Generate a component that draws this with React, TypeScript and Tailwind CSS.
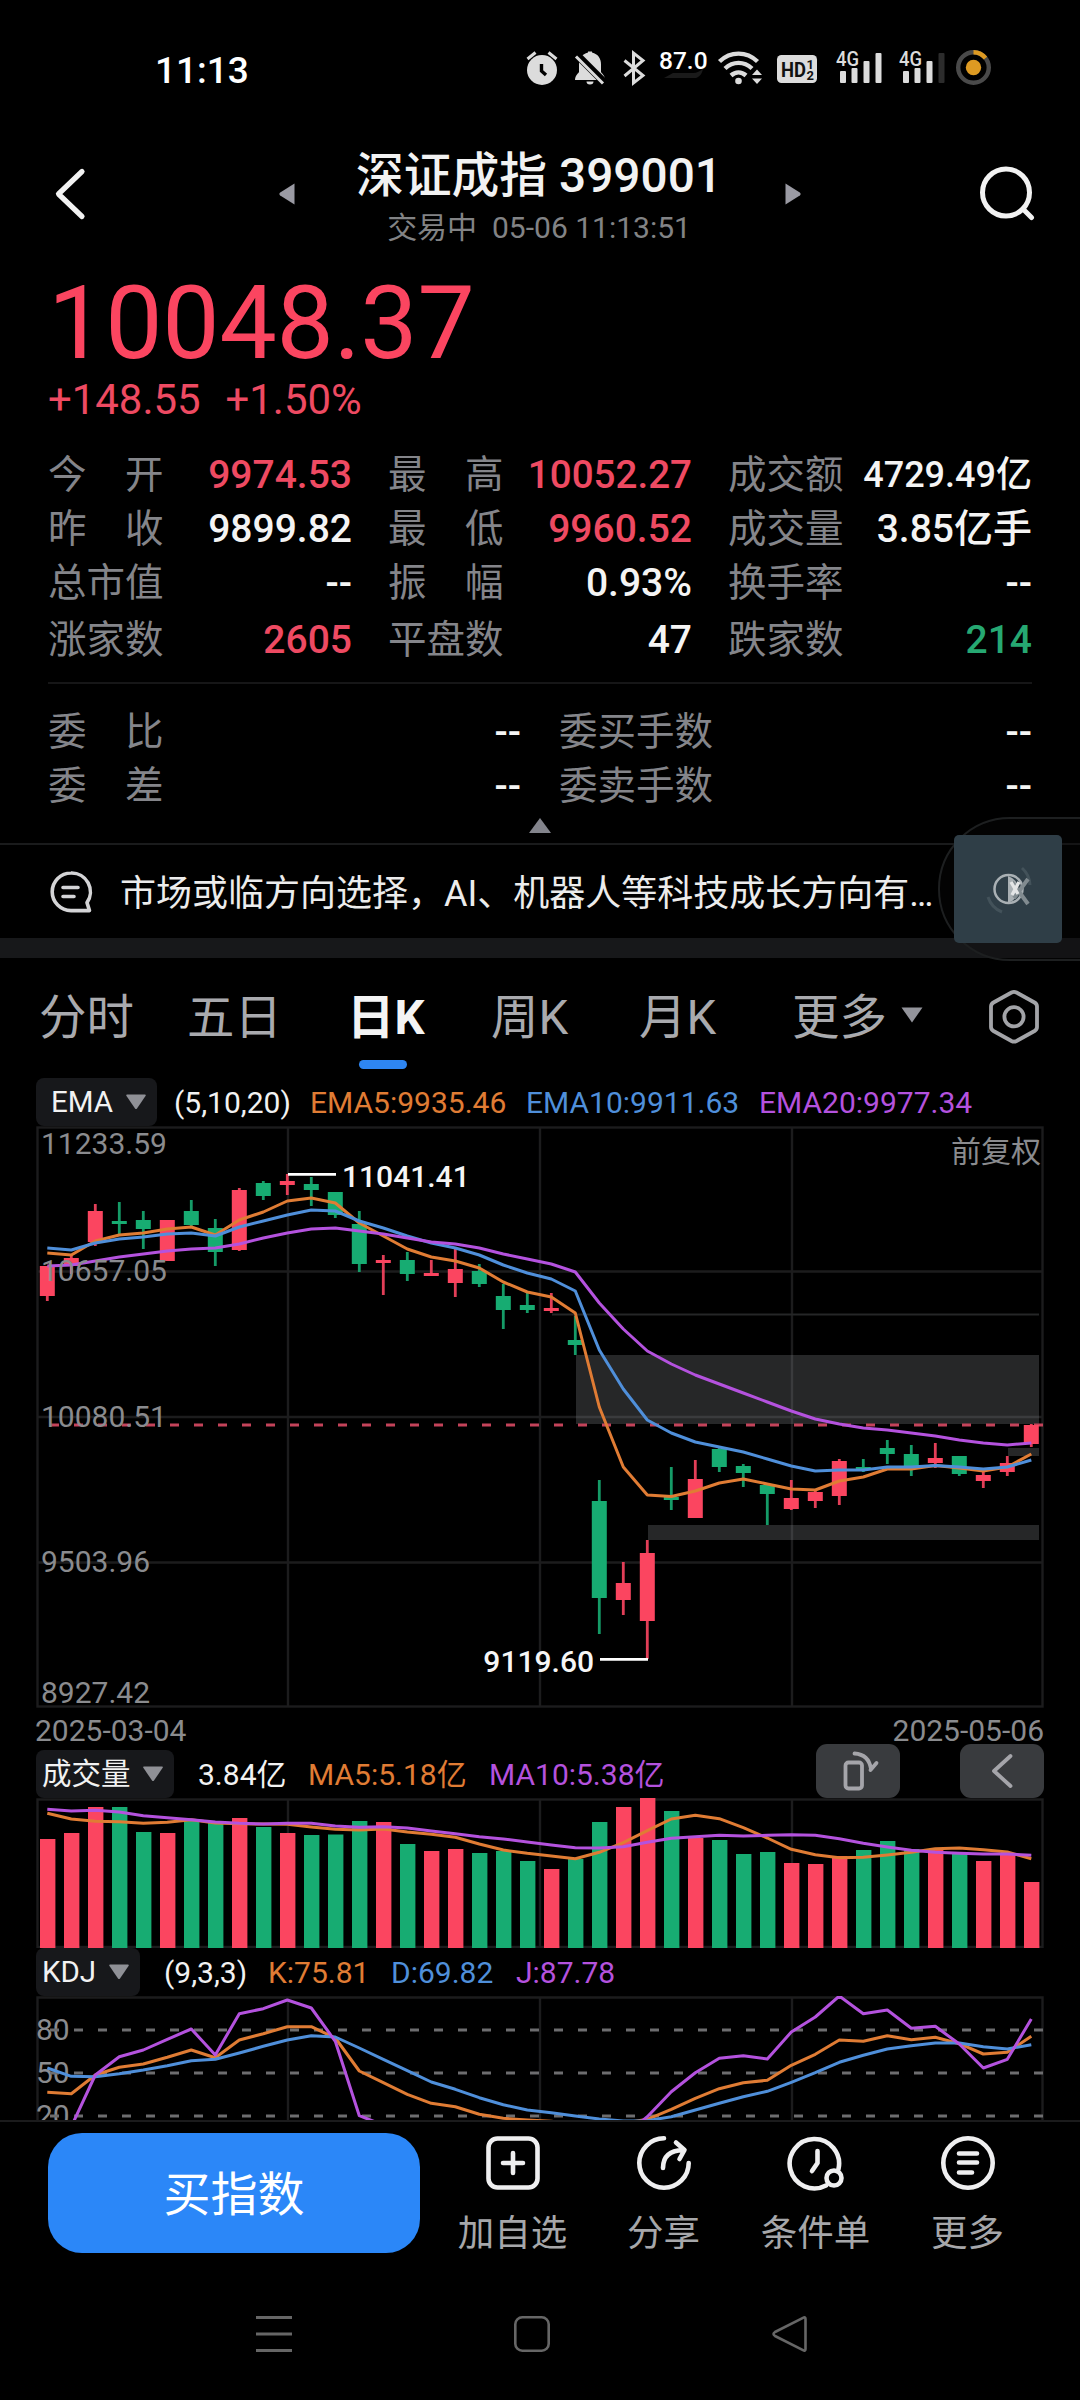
import { useState, type ReactNode } from "react";

type Candle = {
  up: boolean;
  high: number;
  top: number;
  bottom: number;
  low: number;
};

type Quote = {
  label: string;
  value: string;
  tone?: string;
};

type LegendItem = {
  text: string;
  className: string;
};

const RED = "#fb4560";
const GREEN = "#17ac72";
const ORANGE = "#e07c34";
const BLUE = "#4f8fda";
const PURPLE = "#b452de";
const GRID = "#1c1c1d";

const FIRST_X = 47.3;
const STEP = 24;

const quotes: Quote[] = [
  { label: "今　开", value: "9974.53", tone: "text-[39px] text-[#ee4a62]" },
  { label: "最　高", value: "10052.27", tone: "text-[38.600px] text-[#ee4a62]" },
  { label: "成交额", value: "4729.49亿", tone: "text-[36px] text-[#f4f4f4]" },
  { label: "昨　收", value: "9899.82" },
  { label: "最　低", value: "9960.52", tone: "text-[39px] text-[#ee4a62]" },
  { label: "成交量", value: "3.85亿手" },
  { label: "总市值", value: "--" },
  { label: "振　幅", value: "0.93%" },
  { label: "换手率", value: "--" },
  { label: "涨家数", value: "2605", tone: "text-[39px] text-[#ee4a62]" },
  { label: "平盘数", value: "47" },
  { label: "跌家数", value: "214", tone: "text-[39px] text-[#26a872]" },
];

const orders: Quote[] = [
  { label: "委　比", value: "--" },
  { label: "委买手数", value: "--" },
  { label: "委　差", value: "--" },
  { label: "委卖手数", value: "--" },
];

// up flag, high, body top, body bottom, low
const candles: Candle[] = (
  [
    [1, 1266, 1266, 1296, 1301],
    [1, 1255, 1258, 1266, 1274],
    [1, 1204, 1211, 1242, 1246],
    [0, 1202, 1221, 1224, 1234],
    [0, 1211, 1220, 1229, 1249],
    [1, 1220, 1220, 1261, 1261],
    [0, 1200, 1211, 1225, 1226],
    [0, 1219, 1228, 1252, 1266],
    [1, 1188, 1190, 1250, 1251],
    [0, 1181, 1183, 1196, 1200],
    [1, 1174, 1181, 1185, 1195],
    [0, 1177, 1184, 1190, 1206],
    [0, 1192, 1192, 1215, 1218],
    [0, 1211, 1224, 1264, 1272],
    [1, 1255, 1260, 1263, 1295],
    [0, 1252, 1260, 1274, 1281],
    [1, 1260, 1273, 1276, 1276],
    [1, 1248, 1269, 1283, 1297],
    [0, 1264, 1271, 1284, 1287],
    [0, 1284, 1296, 1310, 1329],
    [0, 1292, 1305, 1310, 1313],
    [1, 1293, 1308, 1311, 1313],
    [0, 1316, 1340, 1345, 1355],
    [0, 1480, 1501, 1598, 1634],
    [1, 1562, 1583, 1600, 1615],
    [1, 1540, 1553, 1621, 1659],
    [0, 1467, 1497, 1500, 1510],
    [1, 1460, 1479, 1518, 1518],
    [0, 1448, 1449, 1467, 1472],
    [0, 1464, 1466, 1473, 1487],
    [0, 1484, 1485, 1494, 1525],
    [1, 1480, 1498, 1509, 1510],
    [1, 1490, 1492, 1501, 1508],
    [1, 1459, 1461, 1496, 1505],
    [0, 1459, 1467, 1470, 1472],
    [0, 1440, 1448, 1454, 1464],
    [0, 1445, 1454, 1467, 1476],
    [1, 1443, 1458, 1463, 1468],
    [0, 1456, 1456, 1474, 1476],
    [1, 1472, 1475, 1481, 1488],
    [1, 1456, 1463, 1472, 1476],
    [1, 1424, 1425, 1444, 1447],
  ] as number[][]
).map(([up, high, top, bottom, low]) => ({
  up: up === 1,
  high,
  top,
  bottom,
  low,
}));

const ema5 = [
  1253, 1255, 1241, 1235, 1233, 1229, 1227, 1235, 1220, 1212, 1201, 1198, 1203,
  1223, 1236, 1249, 1257, 1261, 1268, 1282, 1292, 1297, 1313, 1407, 1467, 1495,
  1496.5, 1491, 1483, 1479, 1484, 1489, 1490, 1481, 1477, 1469, 1469, 1465.5,
  1468, 1471, 1467, 1454,
];

const ema10 = [
  1248, 1250, 1243, 1239, 1237, 1234, 1233, 1236, 1227, 1221, 1215, 1210, 1211,
  1221, 1228, 1236, 1243, 1248, 1255, 1265, 1273, 1279, 1291, 1350, 1389, 1420,
  1433, 1442, 1447, 1452, 1459, 1466, 1471, 1470, 1470, 1467, 1467, 1465.5,
  1467, 1469, 1467, 1460,
];

const ema20 = [
  1266, 1265, 1261, 1257, 1254, 1251, 1249, 1248, 1244, 1238, 1233, 1229, 1228,
  1231, 1234, 1238, 1242, 1244, 1248, 1254, 1259, 1264, 1272, 1303, 1329, 1351,
  1364, 1375, 1384, 1393, 1402, 1411, 1419, 1424, 1428, 1430, 1433, 1436, 1440,
  1443, 1445, 1443,
];

const volumeColors =
  "rrrggrggrgrgggrgrrgggrggrrgrgggrrrgggrgrrr".split("");

const volumeTops = [
  1839, 1833, 1807, 1807, 1832, 1833, 1819, 1822, 1818, 1827, 1833, 1835, 1834.5,
  1821, 1822, 1844, 1851, 1849, 1853, 1851, 1861, 1869, 1859, 1822, 1807, 1798,
  1811, 1838, 1840, 1854, 1852, 1863, 1864, 1856, 1850, 1841, 1849, 1849, 1854,
  1861, 1853, 1882,
];

const volumeMa5 = [
  280, 297, 304, 305, 310, 307, 299, 309, 311, 312, 313, 321, 328, 330, 327, 336,
  343, 352, 372, 390, 400, 408, 416, 397, 368, 332, 297, 286, 296, 323, 354, 388,
  404, 413, 412, 405, 397, 386, 384, 389, 396, 416,
].map((v) => 1720 + v / 3);

const volumeMa10 = [
  268, 273, 271, 276, 287, 293, 299, 306, 310, 312, 310, 310, 318, 322, 320, 324,
  333, 341, 350, 357, 366, 375, 383, 384, 380, 367, 355, 350, 346, 348, 346, 344,
  346, 356, 370, 381, 391, 397, 400, 402, 402, 406,
].map((v) => 1720 + v / 3);

const kLine = [
  427, 431, 375, 352, 342, 322, 300, 323, 270, 251, 230, 230, 264, 363, 398, 433,
  460, 470, 493, 505, 510, 514, 520, 520, 520, 508, 478, 445, 416, 398, 391, 346,
  313, 270, 274, 257, 269, 262, 281, 312, 307, 259,
].map((v) => 1950 + v / 3);

const dLine = [
  354, 379, 380, 371, 360, 347, 332, 328, 309, 289, 270, 257, 261, 294, 328, 362,
  396, 418, 443, 464, 480, 488, 498, 507, 513, 512, 500, 480, 460, 440, 424, 397,
  368, 337, 316, 297, 287, 279, 279, 290, 297, 284,
].map((v) => 1950 + v / 3);

const jLine = [
  640, 530, 375, 320, 300, 268, 237, 315, 191, 176, 150, 174, 274, 497, 525, 600,
  640, 640, 640, 640, 640, 640, 640, 640, 560, 500, 425, 368, 325, 317, 327, 246,
  201, 138, 191, 180, 235, 229, 282, 354, 328, 207,
].map((v) => 1950 + v / 3);

const xAt = (index: number) => FIRST_X + index * STEP;

const toPoints = (values: number[]) =>
  values.map((y, i) => `${xAt(i).toFixed(1)},${y.toFixed(1)}`).join(" ");

function Line({ values, color }: { values: number[]; color: string }) {
  return (
    <polyline
      points={toPoints(values)}
      fill="none"
      stroke={color}
      strokeWidth={3}
      strokeLinejoin="round"
    />
  );
}

function StatusBar() {
  return (
    <div className="flex h-[110px] items-center pt-[28px]">
      <span className="ml-[155px] pt-[3px] text-[37px] leading-[40px] font-medium text-white">
        11:13
      </span>
      <svg
        width="480"
        height="60"
        viewBox="520 40 480 60"
        className="ml-auto mr-[80px]"
        fill="#dcdcdc"
      >
        {/* alarm */}
        <circle cx="542" cy="71" r="15" />
        <path
          d="M527.500 60l8-6.500M556.500 60l-8-6.500"
          stroke="#dcdcdc"
          strokeWidth="3"
        />
        <path d="M541.500 65v7l4.500 4" stroke="#000" strokeWidth="3.400" fill="none" />
        {/* muted bell */}
        <path d="M588 53.500v-1h4v1c6 1.500 9 6 9 12v7c0 2 4 3 4 8.500h-30c0-5.500 4-6.500 4-8.500v-7c0-6 3-10.500 9-12zM586.500 82.500h7a3.500 3 0 0 1-7 0z" />
        <path d="M577 56l28 28" stroke="#000" strokeWidth="7.500" />
        <path d="M576 57.500l27 27" stroke="#dcdcdc" strokeWidth="3" />
        {/* bluetooth */}
        <path
          d="M624.500 61.500L643 76.500l-9.500 7.500V54l9.500 7.500L624.500 77"
          fill="none"
          stroke="#dcdcdc"
          strokeWidth="3"
        />
        <text x="659" y="69.500" fontSize="24.500" fontWeight="500" fill="#fff">
          87.0
        </text>
        <path d="M664 79h32c5-2 6-5 7-9-3 2-6 4-10 4h-20z" fill="#1a1a1a" />
        {/* wifi */}
        <g fill="none" stroke="#dcdcdc" strokeWidth="4.400">
          <path d="M719.500 62.500c11-10.500 27-10.500 38 0" />
          <path d="M725 69.500c8-7.500 19-7.500 27 0" />
          <path d="M731 76.500c4.500-4 10.500-4 15 0" />
        </g>
        <circle cx="738.500" cy="82" r="3.300" />
        <path d="M752 76l5-5.500 5 5.500zM752 79.500l5 5.500 5-5.500z" />
        {/* hd badge */}
        <rect x="777" y="56" width="40" height="28" rx="4.500" />
        <text x="781" y="78" fontSize="21" fontWeight="700" fill="#111" textLength="25" lengthAdjust="spacingAndGlyphs">
          HD
        </text>
        <text x="806.500" y="69.500" fontSize="13" fontWeight="700" fill="#111">
          1
        </text>
        <text x="806.500" y="81" fontSize="13" fontWeight="700" fill="#111">
          2
        </text>
        {/* signals */}
        <text x="836" y="67" fontSize="20" fontWeight="500" textLength="23" lengthAdjust="spacingAndGlyphs">
          4G
        </text>
        <rect x="840" y="72" width="6" height="12" rx="1" />
        <rect x="851.500" y="69" width="6" height="15" rx="1" />
        <rect x="863.500" y="62" width="6" height="22" rx="1" />
        <rect x="875.500" y="54" width="6" height="30" rx="1" />
        <text x="899" y="67" fontSize="20" fontWeight="500" textLength="23" lengthAdjust="spacingAndGlyphs">
          4G
        </text>
        <rect x="903" y="72" width="6" height="12" rx="1" />
        <rect x="914.500" y="69" width="6" height="15" rx="1" />
        <rect x="926.500" y="62" width="6" height="22" rx="1" />
        <rect x="938.500" y="54" width="6" height="30" rx="1" fill="#2c2c2c" />
        {/* battery ring */}
        <circle cx="973.500" cy="68.500" r="15.300" fill="none" stroke="#4a4a4a" strokeWidth="4.400" />
        <path d="M973.500 53.200a15.300 15.300 0 0 1 12 6" fill="none" stroke="#dd9a22" strokeWidth="4.400" />
        <circle cx="973.500" cy="68.500" r="7.700" fill="#dd9a22" />
      </svg>
    </div>
  );
}

function Header() {
  return (
    <header className="flex h-[160px] items-start">
      <svg width="48" height="56" viewBox="48 166 48 56" className="mt-[56px] ml-[48px]">
        <path d="M82 171.500L58.500 194 82 216.500" fill="none" stroke="#f2f2f2" strokeWidth="5.200" strokeLinecap="round" strokeLinejoin="round" />
      </svg>
      <svg width="16" height="22" viewBox="0 0 16 22" className="mt-[73px] ml-[183px]" fill="#9a9aa3">
        <path d="M15.500 0.500v21L1.200 12.500q-1.700-1.500 0-3z" />
      </svg>
      <div className="mt-[41px] flex w-[488px] flex-col items-center">
        <h1 className="text-[47.800px] leading-[50px] font-medium whitespace-nowrap text-[#f2f2f2]">
          深证成指 399001
        </h1>
        <p className="mt-[2px] text-[30px] leading-[50px] whitespace-pre text-[#828385]">
          交易中  05-06 11:13:51
        </p>
      </div>
      <svg width="16" height="22" viewBox="0 0 16 22" className="mt-[73px] ml-[2px]" fill="#9a9aa3">
        <path d="M0.500 0.500v21l14.300-9q1.700-1.500 0-3z" />
      </svg>
      <svg width="60" height="60" viewBox="976 162 60 60" className="mt-[52px] ml-[174px]" fill="none" stroke="#f2f2f2" strokeWidth="5">
        <circle cx="1007" cy="192.500" r="23.500" />
        <path d="M1024 209l8.500 8.500" strokeLinecap="round" />
      </svg>
    </header>
  );
}

function PriceBlock() {
  return (
    <section className="h-[178px] pl-[48px] text-[#fb4560]">
      <div className="h-[106px] text-[102px] leading-[106px] tracking-[-0.200px]">
        10048.37
      </div>
      <div className="flex h-[44px] gap-[25px] text-[41.900px] leading-[48px] text-[#ee4a62]">
        <span>+148.55</span>
        <span>+1.50%</span>
      </div>
    </section>
  );
}

function QuoteCell({ quote }: { quote: Quote }) {
  return (
    <div className="flex items-center justify-between whitespace-nowrap">
      <span className="text-[38.500px] text-[#84858a]">{quote.label}</span>
      <span className={`font-medium ${quote.tone ?? "text-[39px] text-[#f4f4f4]"}`}>
        {quote.value}
      </span>
    </div>
  );
}

function QuoteGrid() {
  return (
    <section className="h-[395px] px-[48px] leading-[54px]">
      <div className="grid grid-cols-3 grid-rows-[54px_54px_54px_60px] gap-x-[36px]">
        {quotes.map((quote) => (
          <QuoteCell key={quote.label} quote={quote} />
        ))}
      </div>
      <div className="mt-[12px] h-[2px] bg-[#161617]" />
      <div className="mt-[21px] grid grid-cols-2 grid-rows-[54px_54px] gap-x-[38px]">
        {orders.map((quote) => (
          <QuoteCell key={quote.label} quote={quote} />
        ))}
      </div>
      <svg width="24" height="16" viewBox="0 0 24 16" className="mx-auto mt-[5px]">
        <path d="M12 0l11 15H1z" fill="#83848c" />
      </svg>
    </section>
  );
}

function NewsRow() {
  return (
    <section className="relative flex h-[95px] items-center border-t-2 border-[#1a1b1c]">
      <svg width="44" height="44" viewBox="0 0 44 44" className="ml-[49px]" fill="none" stroke="#d4d4d6" strokeWidth="3.600" strokeLinecap="round">
        <path d="M22 3a18.800 18.800 0 1 0 0 37.600h18.500l-2.500-8A18.800 18.800 0 0 0 22 3z" strokeLinejoin="round" />
        <path d="M14 17.500h15M14 26.500h11" />
      </svg>
      <span className="ml-[27px] pt-[4px] text-[36px] leading-[50px] whitespace-nowrap text-[#ececec]">
        市场或临方向选择，AI、机器人等科技成长方向有…
      </span>
      {/* floating assistant */}
      <svg width="144" height="148" viewBox="936 814 144 148" className="absolute -top-[31px] right-0">
        <path d="M1090 818h-80a71 71 0 0 0 0 142h80" fill="#0a0b0b" fillOpacity="0.300" stroke="#1d1f20" strokeWidth="2" />
        <rect x="954" y="835" width="108" height="108" rx="5" fill="#2f3e47" />
        <path d="M1022 868a24 24 0 0 1 8 17M988 897a24 24 0 0 0 14 15" fill="none" stroke="#43525a" strokeWidth="3" />
        <circle cx="1008.500" cy="889" r="14" fill="none" stroke="#a9b0b4" strokeWidth="2.500" />
        <path d="M1008 876a14 14 0 0 1 0 27z" fill="#a9b0b4" />
        <path d="M1028 879l-14 19M1012 882l16 22" stroke="#818b90" strokeWidth="4" />
        <path d="M1011 882l7 12M1019 882l-7 13" stroke="#e3e5e6" strokeWidth="3.400" />
      </svg>
    </section>
  );
}

const tabs = [
  { name: "分时", className: "w-[148px]" },
  { name: "五日", className: "w-[160px]" },
  { name: "日K", className: "w-[144px]" },
  { name: "周K", className: "w-[148px]" },
  { name: "月K", className: "w-[153px]" },
  { name: "更多", className: "w-[109px]" },
];

function PeriodTabs() {
  const [active, setActive] = useState("日K");

  return (
    <nav className="flex h-[120px] pl-[39px] text-[47.400px] text-[#a9aaae]">
      {tabs.map((tab) => {
        const isActive = tab.name === active;
        return (
          <button
            key={tab.name}
            type="button"
            onClick={() => setActive(tab.name)}
            className={`flex shrink-0 flex-col items-start pt-[30px] leading-[60px] whitespace-nowrap ${tab.className} ${
              isActive ? "font-bold text-[#f4f4f4]" : ""
            }`}
          >
            {tab.name}
            {isActive ? (
              <span className="mt-[12px] ml-[12px] h-[9px] w-[48px] rounded-full bg-[#2e86f2]" />
            ) : null}
          </button>
        );
      })}
      <svg width="22" height="16" viewBox="0 0 22 16" className="mt-[49px]">
        <path d="M0.500 0.500h21L11 15.500z" fill="#93949b" />
      </svg>
      <svg width="54" height="58" viewBox="0 0 54 58" className="mt-[30px] ml-[64px]" fill="none" stroke="#a3a4a8" strokeWidth="3.800">
        <path d="M24.500 4.500q2.500-1.300 5 0l18 10q2.500 1.500 2.500 4v20.500q0 2.500-2.500 4l-18 10q-2.500 1.300-5 0l-18-10q-2.500-1.500-2.500-4V18.500q0-2.500 2.500-4z" />
        <circle cx="27" cy="28.800" r="9.600" />
      </svg>
    </nav>
  );
}

function IndicatorChip({
  name,
  className,
}: {
  name: string;
  className: string;
}) {
  return (
    <button
      type="button"
      className={`flex h-[48px] shrink-0 items-center justify-between rounded-[8px] bg-[#17181b] text-[29.500px] leading-[50px] text-[#f2f2f2] ${className}`}
    >
      {name}
      <svg width="22" height="16" viewBox="0 0 22 16">
        <path d="M2 0.500h18q1.500 0 0.500 1.500L12 14.500q-1 1-2 0L1.500 2Q0.500 0.500 2 0.500z" fill="#8f9096" />
      </svg>
    </button>
  );
}

function Legend({ items }: { items: LegendItem[] }) {
  return (
    <>
      {items.map((item) => (
        <span
          key={item.text}
          className={`h-[48px] shrink-0 text-[30px] leading-[50px] whitespace-nowrap ${item.className}`}
        >
          {item.text}
        </span>
      ))}
    </>
  );
}

function CandleChart() {
  return (
    <svg width="1080" height="584" viewBox="0 1126 1080 584" className="block">
      <g fill="none" stroke={GRID} strokeWidth="2.400">
        <rect x="37.500" y="1127.500" width="1005" height="579" />
        <path d="M37 1271.500h1005M37 1417h1005M37 1562.500h1005M288 1128v578M540 1128v578M792 1128v578" />
      </g>
      <path d="M552 1314.500h487" stroke="#252627" strokeWidth="2" />

      <g fill="#8b9093" fillOpacity="0.270">
        <rect x="576" y="1355" width="463" height="69" />
        <rect x="648" y="1525" width="391" height="15" />
        <rect x="1008" y="1448" width="31" height="8" />
      </g>
      <path d="M50 1425h993" stroke="#c4435a" strokeWidth="2.800" strokeDasharray="9 15" />

      {candles.map((c, i) => (
        <g key={i} fill={c.up ? RED : GREEN}>
          <rect x={xAt(i) - 1.4} y={c.high} width={2.8} height={c.low - c.high} fillOpacity={0.9} />
          <rect x={xAt(i) - 7.5} y={c.top} width={15} height={c.bottom - c.top} />
        </g>
      ))}

      <Line values={ema5} color={ORANGE} />
      <Line values={ema10} color={BLUE} />
      <Line values={ema20} color={PURPLE} />

      <g fill="#8a8b8e" fontSize="30">
        <text x="41" y="1153.500">11233.59</text>
        <text x="41" y="1281">10657.05</text>
        <text x="41" y="1426.500">10080.51</text>
        <text x="41" y="1572">9503.96</text>
        <text x="41" y="1702.500">8927.42</text>
        <text x="1041" y="1161.500" textAnchor="end">前复权</text>
      </g>

      <path d="M288 1174.300h48M600 1659.300h48" stroke="#fff" strokeWidth="2.800" />
      <g fill="#f6f6f6" fontSize="30" fontWeight="500">
        <text x="342" y="1187">11041.41</text>
        <text x="594" y="1671.500" textAnchor="end">9119.60</text>
      </g>
    </svg>
  );
}

function VolumeChart() {
  return (
    <svg width="1080" height="150" viewBox="0 1798 1080 150" className="block">
      <g fill="none" stroke={GRID} strokeWidth="2.400">
        <rect x="37.500" y="1799.500" width="1005" height="147.500" />
        <path d="M288 1800v148M540 1800v148M792 1800v148" />
      </g>
      {volumeTops.map((top, i) => (
        <rect
          key={i}
          x={xAt(i) - 7.3}
          y={top}
          width={15.4}
          height={1948 - top}
          fill={volumeColors[i] === "r" ? RED : GREEN}
        />
      ))}
      <Line values={volumeMa5} color={ORANGE} />
      <Line values={volumeMa10} color={PURPLE} />
    </svg>
  );
}

function KdjChart() {
  return (
    <svg width="1080" height="124" viewBox="0 1996 1080 124" className="block">
      <g fill="none" stroke={GRID} strokeWidth="2.400">
        <path d="M37.500 2125V1997.500h1005V2125M288 1998v130M540 1998v130M792 1998v130" />
      </g>
      <g fill="#8a8b8e" fontSize="30">
        <text x="36" y="2039.500">80</text>
        <text x="36" y="2082.500">50</text>
        <text x="36" y="2125.500">20</text>
      </g>
      <path d="M50 2030h993M50 2073h993M50 2116h993" stroke="#6d6d6f" strokeWidth="3" strokeDasharray="9 15" />
      <Line values={kLine} color={ORANGE} />
      <Line values={dLine} color={BLUE} />
      <Line values={jLine} color={PURPLE} />
    </svg>
  );
}

function Action({
  label,
  className,
  children,
}: {
  label: string;
  className: string;
  children: ReactNode;
}) {
  return (
    <button
      type="button"
      className={`flex shrink-0 flex-col items-center ${className}`}
    >
      <svg
        width="60"
        height="60"
        viewBox="0 0 60 60"
        fill="none"
        stroke="#efeff0"
        strokeWidth="4.600"
        strokeLinecap="round"
        strokeLinejoin="round"
      >
        {children}
      </svg>
      <span className="mt-[16px] text-[36.500px] leading-[50px] whitespace-nowrap text-[#a6a7aa]">
        {label}
      </span>
    </button>
  );
}

function BottomBar() {
  return (
    <footer className="flex h-[150px] items-start border-t-2 border-[#1b1b1c]">
      <button
        type="button"
        className="mt-[11px] ml-[48px] h-[120px] w-[372px] rounded-[34px] bg-[#2b87f8] text-[47px] leading-[120px] text-white"
      >
        <span className="block pt-[3px] leading-[117px]">买指数</span>
      </button>
      <div className="mt-[11px] ml-[17px] flex">
        <Action label="加自选" className="w-[151px]">
          <rect x="5.500" y="5.500" width="49" height="49" rx="9" />
          <path d="M30 20v20M20 30h20" />
        </Action>
        <Action label="分享" className="w-[151px]">
          <path d="M30 5.300A24.700 24.700 0 1 0 54.700 30" />
          <path d="M29 35c0-11 6-17.500 20-18M42 9.500l8.500 7.500-5 9" />
        </Action>
        <Action label="条件单" className="w-[153px]">
          <path d="M52.500 36A24.700 24.700 0 1 0 40 52.500" />
          <path d="M31.500 18v12l-5.500 8" />
          <circle cx="48" cy="45" r="7.500" />
        </Action>
        <Action label="更多" className="w-[151px]">
          <circle cx="30" cy="30" r="24.700" />
          <path d="M21 20.500h18M21 29.500h18M21 39.500h13" />
        </Action>
      </div>
    </footer>
  );
}

function SystemNav() {
  return (
    <div className="flex h-[130px] items-start pt-[43px]">
      <svg width="40" height="42" viewBox="0 0 40 42" className="ml-[254px]" stroke="#666" strokeWidth="2.800">
        <path d="M2 4.500h36M2 21h36M2 37.500h36" />
      </svg>
      <svg width="40" height="42" viewBox="0 0 40 42" className="ml-[218px]" fill="none" stroke="#666" strokeWidth="2.600">
        <rect x="3.300" y="4.300" width="33.400" height="33.400" rx="7" />
      </svg>
      <svg width="40" height="42" viewBox="0 0 40 42" className="ml-[218px]" fill="none" stroke="#666" strokeWidth="2.600" strokeLinejoin="round">
        <path d="M35.500 6v30q0 2.500-2.500 1.200L5 23q-3-2 0-4L33 4.800q2.500-1.300 2.500 1.200z" />
      </svg>
    </div>
  );
}

export default function App() {
  return (
    <div className="h-[2400px] w-[1080px] overflow-hidden bg-black font-['Roboto','Noto_Sans_CJK_SC',sans-serif]">
      <StatusBar />
      <Header />
      <PriceBlock />
      <QuoteGrid />
      <NewsRow />
      <div className="h-[20px] bg-[#17181a]" />
      <PeriodTabs />

      <div className="flex h-[48px] pl-[36px]">
        <IndicatorChip name="EMA" className="w-[121px] pr-[10px] pl-[15px]" />
        <Legend
          items={[
            { text: "(5,10,20)", className: "ml-[17px] w-[136px] text-[#f2f2f2]" },
            { text: "EMA5:9935.46", className: "w-[216px] text-[#e07c34]" },
            { text: "EMA10:9911.63", className: "w-[233px] text-[#4f8fda]" },
            { text: "EMA20:9977.34", className: "text-[#b452de]" },
          ]}
        />
      </div>
      <CandleChart />

      <div className="flex h-[34px] justify-between pr-[36px] pl-[35px] text-[30px] leading-[42px] text-[#8a8b8e]">
        <span>2025-03-04</span>
        <span>2025-05-06</span>
      </div>
      <div className="flex h-[54px] items-end pl-[36px]">
        <IndicatorChip name="成交量" className="w-[138px] pr-[10px] pl-[6px]" />
        <Legend
          items={[
            { text: "3.84亿", className: "ml-[24px] w-[110px] text-[#f2f2f2]" },
            { text: "MA5:5.18亿", className: "w-[181px] text-[#e07c34]" },
            { text: "MA10:5.38亿", className: "w-[327px] text-[#b452de]" },
          ]}
        />
        <button type="button" className="h-[54px] w-[84px] rounded-[11px] bg-[#393b3e]">
          <svg width="84" height="54" viewBox="0 0 84 54" fill="none" stroke="#a5a5aa" strokeWidth="3.800" strokeLinecap="round" strokeLinejoin="round">
            <rect x="29.500" y="18.500" width="16.500" height="26" rx="3" />
            <path d="M38.500 9.500c9 0.500 15 6 16.500 15.500M54.500 26l6-7" />
          </svg>
        </button>
        <button type="button" className="ml-[60px] h-[54px] w-[84px] rounded-[11px] bg-[#393b3e]">
          <svg width="84" height="54" viewBox="0 0 84 54" fill="none" stroke="#a5a5aa" strokeWidth="3.800" strokeLinecap="round" strokeLinejoin="round">
            <path d="M50.500 12L34 27l16.500 15" />
          </svg>
        </button>
      </div>
      <VolumeChart />

      <div className="flex h-[48px] pl-[36px]">
        <IndicatorChip name="KDJ" className="w-[104px] pr-[10px] pl-[6px]" />
        <Legend
          items={[
            { text: "(9,3,3)", className: "ml-[24px] w-[104px] text-[#f2f2f2]" },
            { text: "K:75.81", className: "w-[123px] text-[#e07c34]" },
            { text: "D:69.82", className: "w-[125px] text-[#4f8fda]" },
            { text: "J:87.78", className: "text-[#b452de]" },
          ]}
        />
      </div>
      <KdjChart />

      <BottomBar />
      <SystemNav />
    </div>
  );
}
